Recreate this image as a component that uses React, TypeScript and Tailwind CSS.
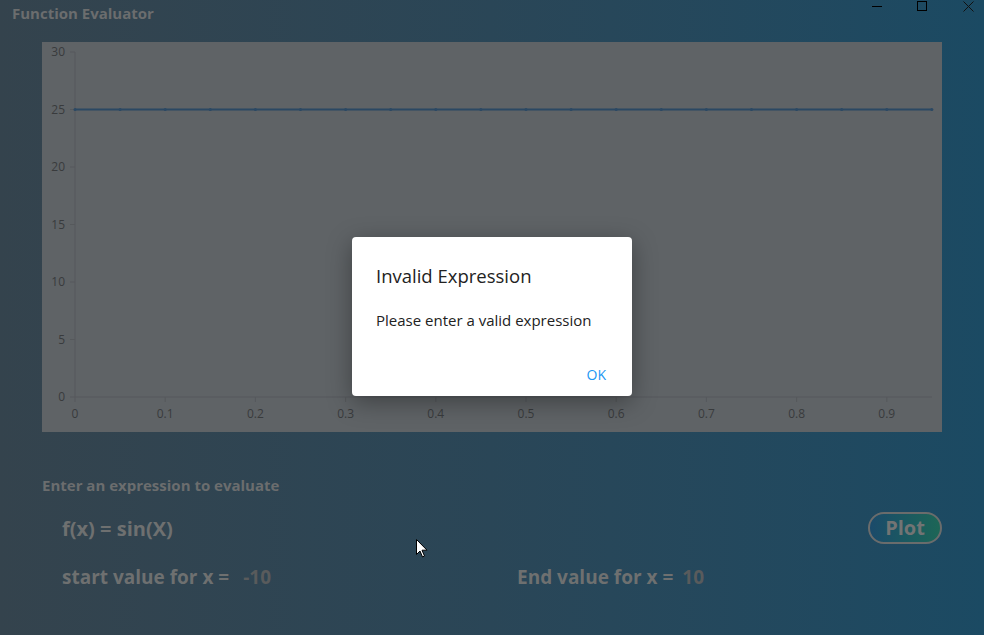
import React from 'react';

const xTicks = [0, 0.1, 0.2, 0.3, 0.4, 0.5, 0.6, 0.7, 0.8, 0.9];
const yTicks = [0, 5, 10, 15, 20, 25, 30];

// plot geometry inside the chart panel
const X0 = 33;
const X1 = 890;
const Y0 = 355;
const Y1 = 10;
const xPx = (v: number) => X0 + v * 902;
const yPx = (v: number) => Y0 - (v / 30) * (Y0 - Y1);

const Chart: React.FC = () => {
  const markers = Array.from({ length: 20 }, (_, i) => xPx(i * 0.05));
  return (
    <svg width="900" height="390" className="block">
      <g stroke="#56595c" strokeWidth="1">
        <line x1={X0} y1={Y1} x2={X0} y2={Y0} />
        <line x1={X0} y1={Y0} x2={X1} y2={Y0} />
        {yTicks.map((t) => (
          <line key={t} x1={X0 - 5} y1={yPx(t)} x2={X0} y2={yPx(t)} />
        ))}
        {xTicks.map((t) => (
          <line key={t} x1={xPx(t)} y1={Y0} x2={xPx(t)} y2={Y0 + 5} />
        ))}
      </g>
      <g fill="#393b3d" fontSize="12" fontFamily="'Open Sans', sans-serif">
        {yTicks.map((t) => (
          <text key={t} x={X0 - 10} y={yPx(t) + 4} textAnchor="end">
            {t}
          </text>
        ))}
        {xTicks.map((t) => (
          <text key={t} x={xPx(t)} y={Y0 + 21} textAnchor="middle">
            {t}
          </text>
        ))}
      </g>
      <line x1={X0} y1={yPx(25)} x2={X1} y2={yPx(25)} stroke="#2b4863" strokeWidth="2" />
      {markers.map((m, i) => (
        <circle key={i} cx={m} cy={yPx(25)} r="1.5" fill="#2b4863" />
      ))}
    </svg>
  );
};

const WindowControls: React.FC = () => (
  <div className="flex items-start h-[26px]">
    <div className="w-[30px] h-[12px] flex items-center justify-center">
      <div className="w-[10px] h-px bg-black" />
    </div>
    <div className="w-[60px] h-[12px] flex items-center justify-center">
      <div className="w-[10px] h-[10px] border border-black" />
    </div>
    <div className="w-[32px] h-[12px] flex items-center justify-center">
      <svg width="11" height="11" viewBox="0 0 11 11">
        <path d="M0.5 0.5 L10.5 10.5 M10.5 0.5 L0.5 10.5" stroke="#111" strokeWidth="1" />
      </svg>
    </div>
  </div>
);

const App: React.FC = () => {
  return (
    <div
      className="relative w-[984px] h-[635px] overflow-hidden bg-gradient-to-r from-[#34434d] via-[#2a4657] to-[#1b4a63]"
      style={{ fontFamily: "'Open Sans', 'Noto Sans', sans-serif" }}
    >
      {/* Title bar */}
      <div className="flex justify-between items-start h-[26px]">
        <span className="pl-[12px] pt-[2px] text-[15px] font-bold text-[#6b6d6e]">
          Function Evaluator
        </span>
        <WindowControls />
      </div>

      {/* Chart */}
      <div className="mx-[42px] mt-[16px] h-[390px] bg-[#5f6366]">
        <Chart />
      </div>

      {/* Form */}
      <div className="px-[42px] pt-[42px]">
        <div className="text-[15px] font-bold text-[#6b6d6e]">
          Enter an expression to evaluate
        </div>
        <div className="flex items-center justify-between pl-[20px] mt-[15px] h-[32px]">
          <span className="text-[20px] font-bold text-[#6e7070] pt-[2px]">f(x) = sin(X)</span>
          <button className="w-[74px] h-[32px] rounded-full border-2 border-[#6a6c6c] bg-gradient-to-r from-[#1b4a6a] to-[#1d6656] text-[20px] font-bold text-[#727474] leading-none">
            Plot
          </button>
        </div>
        <div className="flex items-center pl-[20px] mt-[19px] h-[30px] text-[19px] font-bold">
          <div className="w-[455px] flex items-center">
            <span className="text-[#6e7070]">start value for x =</span>
            <span className="ml-[14px] text-[#595b5c]">-10</span>
          </div>
          <span className="text-[#6e7070]">End value for x =</span>
          <span className="ml-[9px] text-[#595b5c]">10</span>
        </div>
      </div>

      {/* Mouse cursor */}
      <svg className="absolute left-[416px] top-[539px]" width="12" height="19" viewBox="0 0 12 19">
        <path d="M0.5 0.5 L0.5 15.5 L4 12 L6.5 18 L8.5 17 L6 11.2 L11 11.2 Z" fill="#fff" stroke="#000" strokeWidth="1" />
      </svg>

      {/* Dialog */}
      <div className="absolute left-[352px] top-[237px] w-[280px] h-[159px] bg-white rounded-[4px] shadow-[0_6px_24px_rgba(0,0,0,0.35)] flex flex-col">
        <div className="pl-[24px] pt-[30px] text-[18.5px] text-[#222] leading-none">Invalid Expression</div>
        <div className="pl-[24px] pt-[27px] text-[15px] text-[#222] leading-none">Please enter a valid expression</div>
        <div className="mt-auto mb-[14px] mr-[26px] self-end text-[14px] text-[#2196f3] leading-none">OK</div>
      </div>
    </div>
  );
};

export default App;
